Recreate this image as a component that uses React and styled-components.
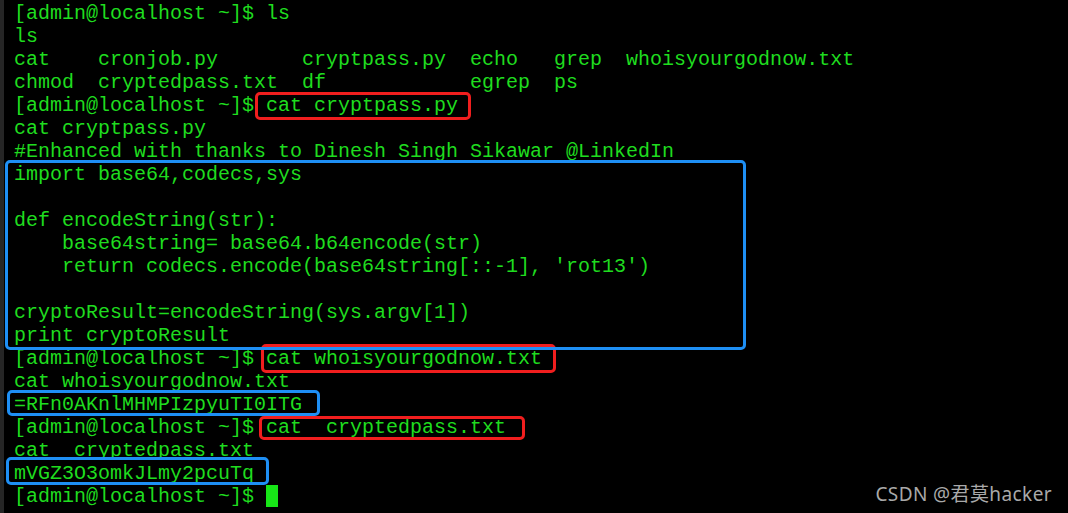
import React from "react";
import styled, { createGlobalStyle } from "styled-components";

const GlobalStyle = createGlobalStyle`
  html, body {
    margin: 0;
    padding: 0;
    background: #000;
  }
  #root { height: 513px; }
`;

const Terminal = styled.div`
  position: relative;
  box-sizing: border-box;
  width: 1068px;
  height: 513px;
  overflow: hidden;
  background: #000;
  border-left: 4px solid #262626;
  padding: 2px 0 0 10px;
  font-family: "Liberation Mono", "DejaVu Sans Mono", monospace;
  font-size: 20px;
  line-height: 23px;
  color: #1fdc1f;
`;

const Line = styled.div`
  height: 23px;
  white-space: pre;
`;

const Cursor = styled.span`
  display: inline-block;
  width: 12px;
  height: 22px;
  vertical-align: top;
  background: #17e617;
`;

const Mark = styled.div`
  position: absolute;
  box-sizing: border-box;
  left: ${(p) => p.$x}px;
  top: ${(p) => p.$y}px;
  width: ${(p) => p.$w}px;
  height: ${(p) => p.$h}px;
  border: 3px solid ${(p) => (p.$tone === "blue" ? "#1e8ff5" : "#f01e1e")};
  border-radius: 5px;
  pointer-events: none;
`;

const Watermark = styled.div`
  position: absolute;
  right: 16px;
  bottom: 8px;
  font-family: "Noto Sans", "Noto Sans CJK SC", sans-serif;
  font-size: 19px;
  letter-spacing: 0.4px;
  line-height: 22px;
  color: #a9a9a9;
  white-space: nowrap;
`;

const PROMPT = "[admin@localhost ~]$ ";

const lines = [
  PROMPT + "ls",
  "ls",
  "cat    cronjob.py       cryptpass.py  echo   grep  whoisyourgodnow.txt",
  "chmod  cryptedpass.txt  df            egrep  ps",
  PROMPT + "cat cryptpass.py",
  "cat cryptpass.py",
  "#Enhanced with thanks to Dinesh Singh Sikawar @LinkedIn",
  "import base64,codecs,sys",
  "",
  "def encodeString(str):",
  "    base64string= base64.b64encode(str)",
  "    return codecs.encode(base64string[::-1], 'rot13')",
  "",
  "cryptoResult=encodeString(sys.argv[1])",
  "print cryptoResult",
  PROMPT + "cat whoisyourgodnow.txt",
  "cat whoisyourgodnow.txt",
  "=RFn0AKnlMHMPIzpyuTI0ITG",
  PROMPT + "cat  cryptedpass.txt",
  "cat  cryptedpass.txt",
  "mVGZ3O3omkJLmy2pcuTq",
];

const marks = [
  { tone: "red", x: 255, y: 92, w: 216, h: 28 },
  { tone: "red", x: 261, y: 344, w: 295, h: 29 },
  { tone: "red", x: 259, y: 416, w: 266, h: 24 },
  { tone: "blue", x: 5, y: 160, w: 741, h: 190 },
  { tone: "blue", x: 7, y: 390, w: 313, h: 26 },
  { tone: "blue", x: 6, y: 457, w: 263, h: 28 },
];

export default function App() {
  return (
    <>
      <GlobalStyle />
      <Terminal>
        {lines.map((t, i) => (
          <Line key={i}>{t}</Line>
        ))}
        <Line>
          {PROMPT}
          <Cursor />
        </Line>
        {marks.map((m, i) => (
          <Mark key={i} $tone={m.tone} $x={m.x - 4} $y={m.y} $w={m.w} $h={m.h} />
        ))}
        <Watermark>CSDN @君莫hacker</Watermark>
      </Terminal>
    </>
  );
}
